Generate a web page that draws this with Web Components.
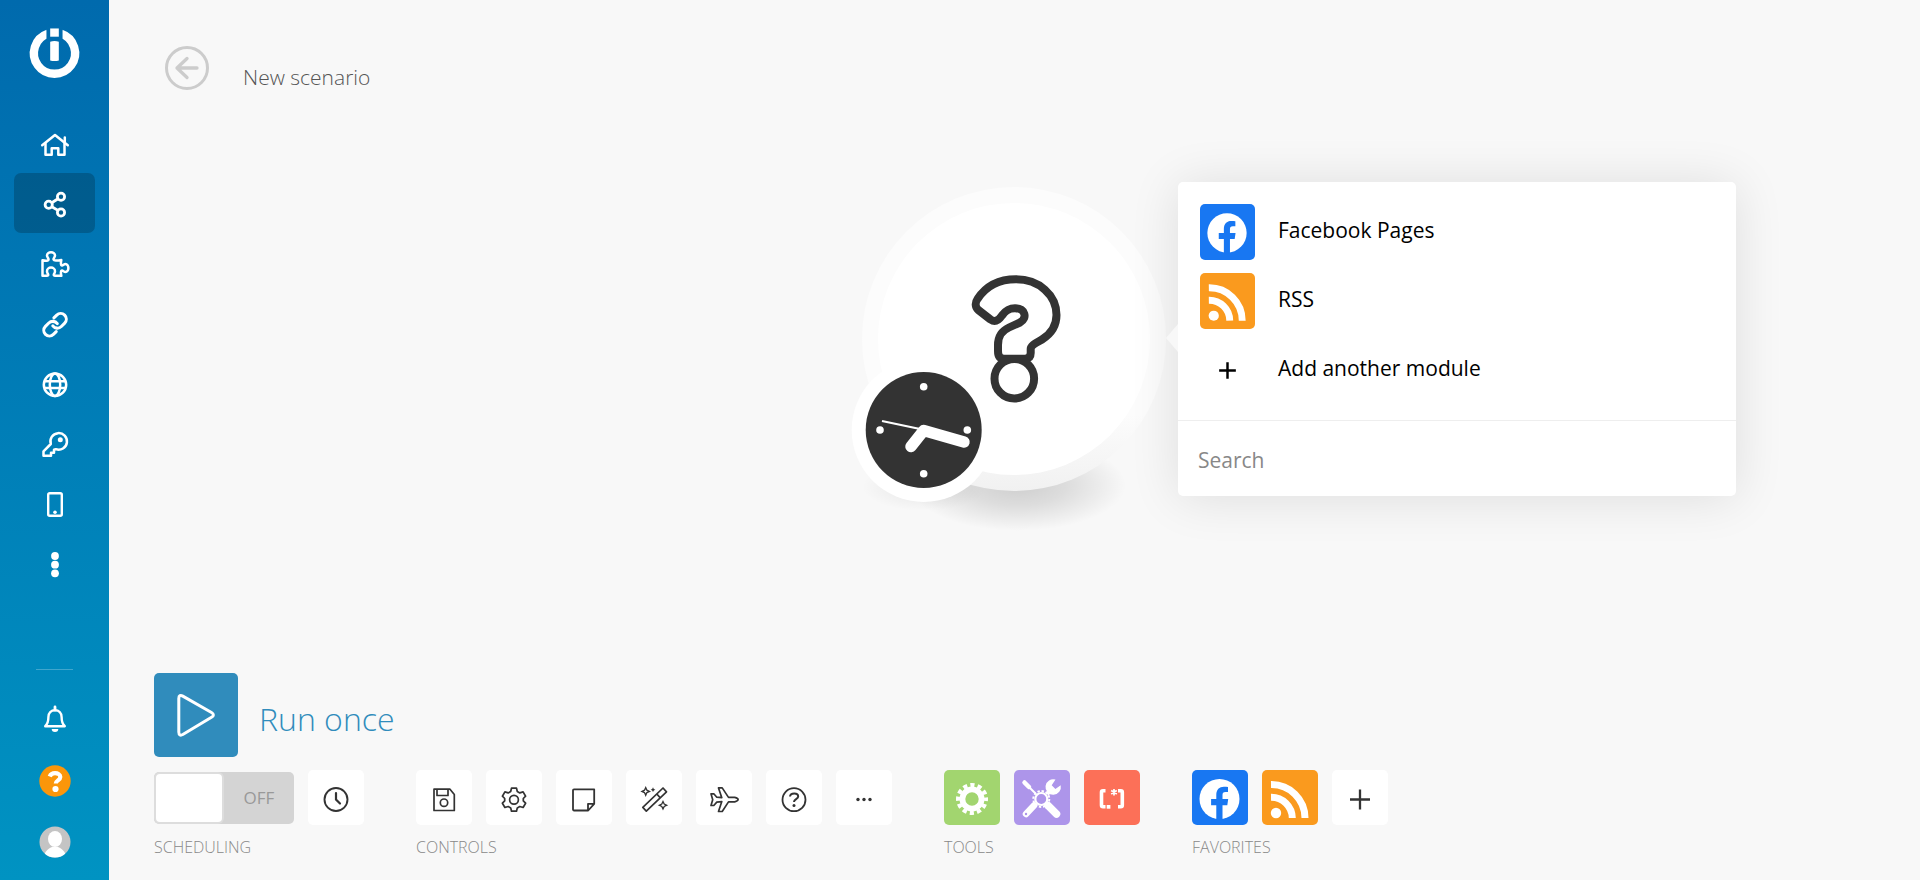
<!DOCTYPE html>
<html lang="en">
<head>
<meta charset="utf-8">
<title>New scenario</title>
<style>
  html, body { margin: 0; height: 100%; }
  body { font-family: "Open Sans", "Noto Sans", sans-serif; background: #f8f8f8; color: #000; }
</style>
</head>
<body>
<scenario-app></scenario-app>
<script>
const ICONS = {
  /* sidebar, 30 x 30 */
  home: ['0 0 30 30', `<g fill="none" stroke="#fff" stroke-width="2.5" stroke-linecap="round" stroke-linejoin="round"><path d="M2.2 15.2 15 5l12.8 10.2"/><path d="M5.5 13.5v11.2h6.2v-6.5h6.6v6.5h6.2V13.5M24.8 11.500V7.500"/></g>`],
  share: ['0 0 30 30', `<g fill="none" stroke="#fff" stroke-width="2.800"><circle cx="21" cy="6.700" r="3.600"/><circle cx="8.700" cy="14.700" r="3.600"/><circle cx="21" cy="22.500" r="3.600"/><path d="M11.800 12.700 18 8.800M11.800 16.700 18 20.400"/></g>`],
  puzzle: ['0 0 30 30', `<path fill="none" stroke="#fff" stroke-width="2.500" stroke-linejoin="round" d="M2.500 10.200c3 .8 6.300.8 6-1C8.300 8 7 7 7 5.600a4 3.400 0 0 1 8 0C15 7 13.700 8 13.500 9.200c-.2 1.800 4 1.500 7.800.8-.6 3.200-.6 5.200.6 5.400 1.200.2 2-1.400 3.600-1.400a2.900 4 0 0 1 0 8c-1.600 0-2.400-1.600-3.600-1.400-1.200.2-1.200 2.100-.6 5.200h-6c-1.600 0-1.800-.8-1.200-1.800.5-.9.9-1.600.9-2.800a4 3.600 0 0 0-8 0c0 1.200.4 1.900.9 2.800.6 1 .4 1.800-1.200 1.800H2.500z"/>`],
  link: ['0 0 30 30', `<g transform="translate(1.500 1.200) scale(1.130)" fill="none" stroke="#fff" stroke-width="2.700" stroke-linecap="round"><path d="M10 13a5 5 0 0 0 7.540.540l3-3a5 5 0 0 0-7.070-7.070l-2.500 2.500"/><path d="M14 11a5 5 0 0 0-7.540-.540l-3 3a5 5 0 0 0 7.070 7.070l2.500-2.500"/></g>`],
  globe: ['0 0 30 30', `<g fill="none" stroke="#fff" stroke-width="2.500"><circle cx="15" cy="14.700" r="11.200"/><ellipse cx="15" cy="14.700" rx="5.200" ry="11.200"/><path d="M4.500 11.300h21M4.500 18.100h21"/></g>`],
  key: ['0 0 30 30', `<path fill="none" stroke="#fff" stroke-width="2.500" stroke-linejoin="round" d="M10.800 14 3.500 21.300v4.400H11v-3h3v-2.900l1.800-.6A8.300 8.300 0 1 0 10.800 14z"/><circle cx="20.300" cy="9.700" r="2.500" fill="#fff"/>`],
  phone: ['0 0 30 30', `<rect x="8.200" y="3.200" width="13.600" height="22.600" rx="1.500" fill="none" stroke="#fff" stroke-width="2.400"/><circle cx="15" cy="22.300" r="1.800" fill="#fff"/>`],
  more: ['0 0 30 30', `<g fill="#fff"><circle cx="15" cy="6" r="3.900"/><circle cx="15" cy="14.700" r="3.900"/><circle cx="15" cy="23.300" r="3.900"/></g>`],
  bell: ['0 0 30 30', `<path fill="none" stroke="#fff" stroke-width="2.400" stroke-linejoin="round" d="M5.200 21.200c2.500-2.200 3.200-4.500 3.200-9.200 0-4 2.800-6.800 6.600-6.800s6.600 2.800 6.600 6.800c0 4.700.7 7 3.200 9.200z"/><path d="M15 2v3" stroke="#fff" stroke-width="2.800" stroke-linecap="round"/><path d="M11.700 24h6.600a3.300 3 0 0 1-6.600 0z" fill="#fff"/>`],
  help: ['0 0 32 32', `<circle cx="16" cy="16" r="15.700" fill="#fb960a"/><path d="M10.700 11.500c1-2.400 2.900-3.300 5.300-3.300 2.900 0 5.300 1.300 5.300 3.800 0 3.300-4.500 3.400-4.500 6.500" fill="none" stroke="#fff" stroke-width="4.200"/><circle cx="16.500" cy="24" r="3.100" fill="#fff"/>`],
  avatar: ['0 0 32 32', `<clipPath id="c"><circle cx="16" cy="16" r="15.500"/></clipPath><circle cx="16" cy="16" r="15.500" fill="#c4c4c4"/><g fill="#fff" clip-path="url(#c)"><ellipse cx="16" cy="13" rx="7" ry="8"/><path d="M5 32c0-7 5-9.500 8-11h6c3 1.500 8 4 8 11z"/></g>`],
  logo: ['0 0 52 52', `<path d="M19.300 7.300a21 21 0 1 0 13.400 0" fill="none" stroke="#fff" stroke-width="8.500"/><path d="M17.800 0h4v14h-4zM30.200 0h4v14h-4z" fill="#016cae"/><path d="M21.600 2h8.800v8.400h-8.800z" fill="#fff"/><path d="M21.600 15.600q4.400-1.600 8.800 0v19q-4.400 1.400-8.800 0z" fill="#fff"/>`],
  back: ['0 0 44 44', `<g fill="none" stroke="#ccc" stroke-width="3"><circle cx="22" cy="22" r="20.500"/><path d="M32 22H12M22 12.500 12 22l10 9.500" stroke-linecap="round" stroke-linejoin="round" stroke-width="3.300"/></g>`],
  play: ['0 0 84 84', `<path d="M24.800 25.500c0-3 1.700-3.700 4-2.400L57.500 39.500c2.500 1.500 2.500 3.300 0 4.800L28.800 61.500c-2.300 1.300-4 .6-4-2.400z" fill="none" stroke="#fff" stroke-width="3"/>`],
  /* toolbar, 56 x 56 */
  clock: ['0 0 56 56', `<g fill="none" stroke="#333"><circle cx="28" cy="29.500" r="11.500" stroke-width="1.900"/><path d="M28 23v6.500l4 4" stroke-width="2.200" stroke-linecap="round"/></g>`],
  save: ['0 0 56 56', `<g fill="none" stroke="#333" stroke-width="1.700" stroke-linejoin="round"><path d="M18 19.200h16l4.300 5.300v16H18z"/><path d="M21 19.500v6h11v-6"/><circle cx="28" cy="32.700" r="3.700"/></g>`],
  gear: ['0 0 56 56', `<g fill="none" stroke="#333" stroke-width="1.700" stroke-linejoin="round"><path d="M25.500 18.200h5l.8 3.300 2.500 1.400 3.300-1 2.500 4.300-2.300 2.300v2.400l2.300 2.300-2.500 4.300-3.300-1-2.500 1.400-.8 3.300h-5l-.8-3.300-2.500-1.400-3.300 1-2.500-4.300 2.300-2.300v-2.400l-2.300-2.300 2.500-4.300 3.300 1 2.500-1.400z"/><circle cx="28" cy="29.700" r="4.400"/></g>`],
  note: ['0 0 56 56', `<path d="M18 19.300h20.200v14.500l-6 6.700H18q-1-.2-1-1V20.300q0-1 1-1zM38 33.800h-6v6.500" fill="none" stroke="#333" stroke-width="1.800" stroke-linejoin="round"/>`],
  wand: ['0 0 56 56', `<g fill="none" stroke="#333" stroke-width="1.700" stroke-linejoin="round"><path d="M37 18 40.500 21.800 20.300 41.200 16.800 37.400zM30.800 24l3.500 3.800"/></g><g fill="#333"><path d="m19.700 17.500 1.200 2.700 2.600 1.200-2.600 1.200-1.200 2.700-1.200-2.700-2.600-1.200 2.600-1.200z" fill="#fff" stroke="#333" stroke-width="1.300"/><path d="m37 31.500 1.200 2.500 2.500 1.200-2.500 1.200-1.200 2.600-1.200-2.600-2.500-1.200 2.500-1.200z" fill="#fff" stroke="#333" stroke-width="1.300"/><path d="m27 17.300.8 1.600 1.600.8-1.600.8-.8 1.600-.8-1.600-1.600-.8 1.600-.8z"/></g>`],
  plane: ['0 0 56 56', `<path d="M15 23.800h2.800l3 3.400 5 .5-3.300-9.800h3.700l6.300 9.500h6.200c2.300.6 3.400 1.300 3.400 2.200s-1.100 1.700-3.400 2.300h-6.200L26.200 41.500h-3.700l3.300-9.900-5 .5-3 3.400H15l1.700-5.800z" fill="none" stroke="#333" stroke-width="1.700" stroke-linejoin="round"/>`],
  ask: ['0 0 56 56', `<g fill="none" stroke="#333"><circle cx="28" cy="29.700" r="11.500" stroke-width="1.800"/><path d="M24 26.500c.4-4 8.200-4 8.200 0 0 2.700-4.200 2.700-4.200 5.500" stroke-width="2"/></g><circle cx="28" cy="35.500" r="1.500" fill="#333"/>`],
  dots: ['0 0 56 56', `<g fill="#333"><circle cx="22" cy="29.500" r="1.700"/><circle cx="28" cy="29.500" r="1.700"/><circle cx="34" cy="29.500" r="1.700"/></g>`],
  plus: ['0 0 56 56', `<path d="M18 29.500h20M28 19.500v20" stroke="#333" stroke-width="2.300"/>`],
  bigplus: ['0 0 56 56', `<path d="M19.500 28.500h17M28 20v17" stroke="#000" stroke-width="2.500"/>`],
  cog: ['0 0 56 56', `<g fill="none" stroke="#fff"><circle cx="28" cy="29" r="9.600" stroke-width="5.800"/><circle cx="28" cy="29" r="14" stroke-width="4" stroke-dasharray="4.200 3.130" stroke-dashoffset="2.100"/></g>`],
  tools: ['0 0 56 56', `<g stroke="#fff" fill="none"><path d="m10.500 12.500 4.500 4.500" stroke-width="4.500" stroke-linecap="round"/><path d="m15 17 7 7" stroke-width="2"/><path d="m12 44 8-8.500" stroke-width="6.500" stroke-linecap="round"/><path d="m34 35.500 8.500 8.500" stroke-width="7.500" stroke-linecap="round"/><path d="m33 24 4-4" stroke-width="4"/><circle cx="27.300" cy="29" r="6" stroke-width="2.200"/><circle cx="27.300" cy="29" r="8" stroke-width="2" stroke-dasharray="2.400 1.790"/></g><path d="M41.500 9.600a7.700 7.700 0 1 0 5.200 5.700l-5.300 3.700-3.700-3.700z" fill="#fff"/><circle cx="12" cy="44" r="1.200" fill="#ad95ea"/>`],
  regex: ['0 0 56 56', `<g fill="none" stroke="#fff"><path d="M21.500 20.800h-2.500q-1.500 0-1.500 1.500v13q0 1.500 1.500 1.500h2.500M34 20.800h2.800q1.500 0 1.500 1.500v13q0 1.500-1.500 1.500H34" stroke-width="3.600"/><path d="M30 19v6.500M27.200 20.600l5.600 3.300M32.800 20.600l-5.600 3.300" stroke-width="1.700"/></g><path d="M22.700 35h3.700v3.700h-3.700z" fill="#fff"/>`],
  facebook: ['0 0 56 56', `<circle cx="27.500" cy="29" r="20" fill="#fff"/><path d="M24.300 50V35.200h-5.200V29h5.200v-4c0-5.600 3-8.300 7.600-8.300 1.500 0 3 .2 4.100.4v5h-2.500c-2.300 0-3 1.300-3 2.900v4h5.700l-.9 6.200h-4.800V50z" fill="#1877f2"/>`],
  rss: ['0 0 56 56', `<g fill="none" stroke="#fff" stroke-width="7"><path d="M9 14.500A33.500 33.500 0 0 1 43 48M9 27.200A21 21 0 0 1 30.300 48"/></g><circle cx="14" cy="43" r="5.200" fill="#fff"/>`]
};

const define = (name, css, html) => {
  customElements.define(name, class extends HTMLElement {
    constructor() {
      super();
      this.attachShadow({ mode: 'open' });
    }
    connectedCallback() {
      if (this.shadowRoot.childNodes.length) return;
      const template = document.createElement('template');
      template.innerHTML = `<style>*{box-sizing:border-box}${css}</style>${typeof html === 'function' ? html(this) : html}`;
      this.shadowRoot.append(template.content.cloneNode(true));
    }
  });
};

define('app-icon', `:host{display:block} svg{display:block;width:100%;height:100%;overflow:visible}`,
  el => { const [box, body] = ICONS[el.getAttribute('name')]; return `<svg viewBox="${box}" aria-hidden="true">${body}</svg>`; });

define('nav-item', `
  :host{display:block}
  a{display:flex;align-items:center;justify-content:center;height:60px;border-radius:7px;padding-top:4px}
  :host([active]) a{background:rgba(0,0,0,.2)}
  :host([round]) a{padding-top:0;height:61px}
  app-icon{width:30px;height:30px}
  :host([round]) app-icon{width:32px;height:32px}
  :host([icon=bell]) app-icon{width:30px;height:30px}`,
  el => `<a href="#${el.getAttribute('icon')}" aria-label="${el.getAttribute('label')}"><app-icon name="${el.getAttribute('icon')}"></app-icon></a>`);

define('side-bar', `
  :host{display:flex;flex-direction:column;width:109px;padding:26px 14px 8px;background:linear-gradient(#006aad,#0093c2)}
  .logo{width:51px;height:52px;margin:0 auto 35px}
  .bottom{margin-top:auto}
  hr{width:37px;height:1px;margin:0 auto 19px;border:0;background:rgba(255,255,255,.25)}`,
  `<app-icon class="logo" name="logo"></app-icon>
   <nav aria-label="Main">
     <nav-item icon="home" label="Home"></nav-item>
     <nav-item icon="share" label="Scenarios" active></nav-item>
     <nav-item icon="puzzle" label="Templates"></nav-item>
     <nav-item icon="link" label="Connections"></nav-item>
     <nav-item icon="globe" label="Webhooks"></nav-item>
     <nav-item icon="key" label="Keys"></nav-item>
     <nav-item icon="phone" label="Devices"></nav-item>
     <nav-item icon="more" label="More"></nav-item>
   </nav>
   <div class="bottom"><hr>
     <nav-item icon="bell" label="Notifications" round></nav-item>
     <nav-item icon="help" label="Help" round></nav-item>
     <nav-item icon="avatar" label="Profile" round></nav-item>
   </div>`);

define('page-header', `
  :host{display:flex;align-items:flex-start;gap:34px;padding:46px 56px 0}
  button{border:0;background:none;padding:0;width:44px;height:44px}
  h1{margin:16px 0 0;font-size:21px;line-height:30px;font-weight:300;color:#555}`,
  `<button aria-label="Back"><app-icon name="back"></app-icon></button><h1><slot></slot></h1>`);

define('module-option', `
  :host{display:block}
  button{display:flex;align-items:center;gap:23px;width:100%;border:0;background:none;padding:0;font:inherit;font-size:21px;line-height:28px;color:#000;text-align:left}
  app-icon{width:55px;height:56px;border-radius:5px;background:var(--tile,none)}
  span{padding-bottom:4px}`,
  el => `<button><app-icon name="${el.getAttribute('icon')}"></app-icon><span><slot></slot></span></button>`);

define('module-picker', `
  :host{display:block;width:558px;background:#fff;border-radius:5px;box-shadow:0 2px 50px rgba(0,0,0,.11)}
  .arrow{position:absolute;left:-12px;top:142px;width:12px;height:28px;background:#f8f8f8;clip-path:polygon(0 50%,100% 0,100% 100%)}
  .list{display:flex;flex-direction:column;gap:13px;padding:22px}
  input{display:block;width:100%;height:76px;border:0;border-top:1px solid #eee;border-radius:0 0 5px 5px;background:none;padding:2px 20px 0;outline:0;font:inherit;font-size:21px;color:#000}
  input::placeholder{color:#888;opacity:1}`,
  `<div class="arrow"></div>
   <div class="list">
     <module-option icon="facebook" style="--tile:#1877f2">Facebook Pages</module-option>
     <module-option icon="rss" style="--tile:#fa9a1e">RSS</module-option>
     <module-option icon="bigplus">Add another module</module-option>
   </div>
   <input type="text" placeholder="Search" aria-label="Search modules">`);

define('module-node', `
  :host{display:block;position:relative;width:304px;height:304px}
  svg{display:block;width:100%;height:100%;overflow:visible}
  module-picker{position:absolute;left:316px;top:-5px}`,
  `<svg viewBox="0 0 304 304" role="img" aria-label="Empty module with schedule">
     <defs>
       <radialGradient id="sh"><stop offset="0" stop-color="#000" stop-opacity=".17"/><stop offset=".45" stop-color="#000" stop-opacity=".11"/><stop offset="1" stop-color="#000" stop-opacity="0"/></radialGradient>
       <linearGradient id="rim" x2="0" y2="1"><stop offset=".75" stop-color="#fcfcfc"/><stop offset="1" stop-color="#f1f1f1"/></linearGradient>
     </defs>
     <ellipse cx="156" cy="298" rx="108" ry="46" fill="url(#sh)"/>
     <ellipse cx="62" cy="300" rx="62" ry="24" fill="url(#sh)" opacity=".4"/>
     <circle cx="152" cy="152" r="152" fill="url(#rim)"/>
     <circle cx="152" cy="152" r="136" fill="#fff"/>
     <g fill="none" stroke="#333" stroke-width="8" stroke-linejoin="round">
       <path d="M116.300 123C113 120 113 115.500 115.500 112 124 99 138 92.300 154 92.300 177 92.300 194.500 108 194.500 128 194.500 140 188 147.500 180 152.500 175 155.500 168.700 158 168.700 162V166Q168.700 171.700 163 171.700H142Q136 171.700 136 164V158C136 149 139.500 144 147 140.500L158 135.500C166 131 163 121.300 153 121.300 146 121.300 143 124.500 140 128.500 136.500 133.500 133 135.500 128.500 132.500z"/>
       <circle cx="152.300" cy="191.700" r="19.800"/>
     </g>
     <circle cx="61.700" cy="243" r="72" fill="#fff"/>
     <circle cx="61.700" cy="243" r="58" fill="#333"/>
     <g fill="#fff"><circle cx="61.700" cy="199.700" r="3.800"/><circle cx="61.700" cy="286.700" r="3.800"/><circle cx="18" cy="243" r="3.800"/><circle cx="105.300" cy="243" r="3.800"/></g>
     <path d="M102 255 61.700 243.500 49 259.500" fill="none" stroke="#fff" stroke-width="11.500" stroke-linecap="round" stroke-linejoin="round"/>
     <path d="M20 234 58 242" stroke="#fff" stroke-width="2.200"/>
   </svg>
   <module-picker></module-picker>`);

define('tool-button', `
  :host{display:block}
  button{display:block;width:56px;height:55px;border:0;border-radius:5px;padding:0;background:var(--tile,#fff)}
  app-icon{width:56px;height:56px}`,
  el => `<button aria-label="${el.getAttribute('label')}"><app-icon name="${el.getAttribute('icon')}"></app-icon></button>`);

define('tool-group', `
  :host{display:block}
  .row{display:flex;align-items:center;gap:14px}
  h2{margin:10px 0 0;font-size:16px;line-height:24px;font-weight:300;color:#888;text-transform:uppercase}`,
  el => `<div class="row"><slot></slot></div><h2>${el.getAttribute('label')}</h2>`);

define('off-switch', `
  :host{display:block}
  label{display:flex;align-items:center;width:140px;height:52px;border-radius:5px;background:#d4d4d4;padding:2px;font-size:17px;color:#999}
  input{appearance:none;margin:0;width:66px;height:48px;border-radius:4px;background:#fff;box-shadow:0 0 0 2px #ddd}
  span{flex:1;text-align:center;padding-left:4px}`,
  `<label><input type="checkbox" role="switch"><span>OFF</span></label>`);

define('run-bar', `
  :host{display:flex;align-items:center;gap:21px}
  button{width:84px;height:84px;border:0;border-radius:5px;padding:0;background:#308cbc}
  label{font-size:32px;line-height:44px;font-weight:300;color:#308cbc;padding-top:8px}`,
  `<button id="run"><app-icon name="play"></app-icon></button><label for="run">Run once</label>`);

define('scenario-app', `
  :host{display:flex;min-height:100vh}
  main{flex:1;min-width:0;display:grid;grid-template-rows:1fr auto}
  page-header,.canvas{grid-area:1/1}
  page-header{align-self:start}
  .canvas{display:flex;align-items:center;justify-content:center;padding:5px 1px 0 0}
  footer{padding:0 45px 21px}
  .groups{display:flex;gap:52px;margin-top:13px}`,
  `<side-bar></side-bar>
   <main>
     <page-header>New scenario</page-header>
     <div class="canvas"><module-node></module-node></div>
     <footer>
       <run-bar></run-bar>
       <div class="groups">
         <tool-group label="Scheduling"><off-switch></off-switch><tool-button icon="clock" label="Schedule"></tool-button></tool-group>
         <tool-group label="Controls">
           <tool-button icon="save" label="Save"></tool-button><tool-button icon="gear" label="Settings"></tool-button>
           <tool-button icon="note" label="Notes"></tool-button><tool-button icon="wand" label="Auto-align"></tool-button>
           <tool-button icon="plane" label="Explain flow"></tool-button><tool-button icon="ask" label="Help"></tool-button>
           <tool-button icon="dots" label="More"></tool-button>
         </tool-group>
         <tool-group label="Tools">
           <tool-button icon="cog" label="Flow control" style="--tile:#a2d56f"></tool-button>
           <tool-button icon="tools" label="Tools" style="--tile:#ad95ea"></tool-button>
           <tool-button icon="regex" label="Text parser" style="--tile:#fc7058"></tool-button>
         </tool-group>
         <tool-group label="Favorites">
           <tool-button icon="facebook" label="Facebook Pages" style="--tile:#1877f2"></tool-button>
           <tool-button icon="rss" label="RSS" style="--tile:#fa9a1e"></tool-button>
           <tool-button icon="plus" label="Add favorite"></tool-button>
         </tool-group>
       </div>
     </footer>
   </main>`);
</script>
</body>
</html>
